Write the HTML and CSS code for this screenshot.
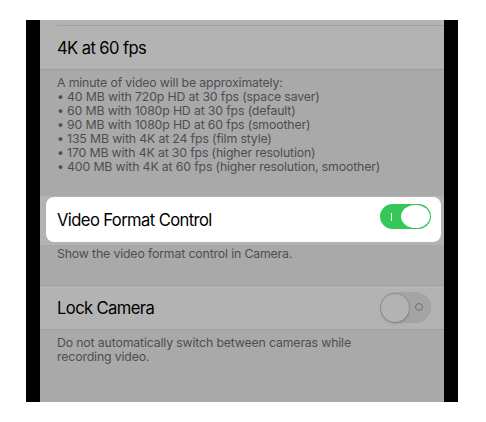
FILE: index.html
```html
<!DOCTYPE html>
<html>
<head>
<link rel="stylesheet" href="styles.css">
</head>
<body>
<div class='device'>
  <div class='screen'>
    <div class='group'>
      <div class='cell-prev'></div>
      <div class='cell'>
        <span class='cell-title'>4K at 60 fps</span>
      </div>
    </div>
    <div class='footer footer-long'>
      A minute of video will be approximately:<br>
      • 40 MB with 720p HD at 30 fps (space saver)<br>
      • 60 MB with 1080p HD at 30 fps (default)<br>
      • 90 MB with 1080p HD at 60 fps (smoother)<br>
      • 135 MB with 4K at 24 fps (film style)<br>
      • 170 MB with 4K at 30 fps (higher resolution)<br>
      • 400 MB with 4K at 60 fps (higher resolution, smoother)
    </div>
    <div class='group group-highlight'>
      <div class='card'>
        <span class='cell-title'>Video Format Control</span>
        <div class='switch switch-on'>
          <span class='switch-label-on'></span>
          <span class='knob'></span>
        </div>
      </div>
    </div>
    <div class='footer footer-short'>Show the video format control in Camera.</div>
    <div class='group group-lock'>
      <div class='cell'>
        <span class='cell-title'>Lock Camera</span>
        <div class='switch switch-off'>
          <span class='knob'></span>
          <span class='switch-label-off'></span>
        </div>
      </div>
    </div>
    <div class='footer'>Do not automatically switch between cameras while<br>recording video.</div>
  </div>
</div>
</body>
</html>
```

FILE: styles.css
```css
body { margin: 0; background: #fff; font-family: Inter, "Noto Sans", sans-serif; }
.device { margin: 20px 0 0 26px; width: 404px; height: 382px; border-left: 14px solid #000; border-right: 14px solid #000; }
.screen { height: 100%; background: #a9a9a9; overflow: hidden; }
.group { background: #b3b3b3; border-bottom: 1px solid #9e9e9e; }
.cell-prev { height: 5px; }
.cell { height: 43px; margin-left: 17px; padding-right: 13px; border-top: 1px solid #a0a0a0; display: flex; align-items: center; justify-content: space-between; }
.cell-title { font-size: 16.6px; letter-spacing: -0.6px; color: #000; }
.footer { padding: 6px 17px 0; font-size: 12.3px; line-height: 14px; color: #4e4e52; letter-spacing: -0.15px; }
.footer-long { height: 120px; }
.footer-short { height: 38px; padding-top: 2px; }
.group-highlight { padding: 1px 3px 3px 6px; border-bottom: none; }
.card { background: #fff; border-radius: 8px; height: 45px; padding: 0 10px 0 11px; display: flex; justify-content: space-between; align-items: flex-start; }
.card .cell-title { margin-top: 13px; }
.group-lock { border-top: 1px solid #a0a0a0; }
.group-lock .cell { border-top: none; }
.switch { position: relative; width: 51px; box-sizing: border-box; border-radius: 16px; display: flex; align-items: center; }
.switch-on { height: 25px; margin-top: 7px; background: #34c759; justify-content: flex-end; padding-right: 1px; }
.switch-on .knob { width: 29px; height: 23px; border-radius: 50%; background: #fff; }
.switch-label-on { position: absolute; left: 11px; top: 9px; width: 1px; height: 8px; background: #fff; }
.switch-off { height: 31px; background: #a4a4a4; padding-left: 1px; }
.switch-off .knob { width: 28px; height: 28px; border-radius: 50%; background: #b3b3b3; box-shadow: 0 0 0 1px rgba(0,0,0,0.12), 0 2px 3px rgba(0,0,0,0.12); }
.switch-label-off { position: absolute; right: 8px; top: 11px; width: 8px; height: 8px; box-sizing: border-box; border: 1px solid #6e6e6e; border-radius: 50%; }
```
